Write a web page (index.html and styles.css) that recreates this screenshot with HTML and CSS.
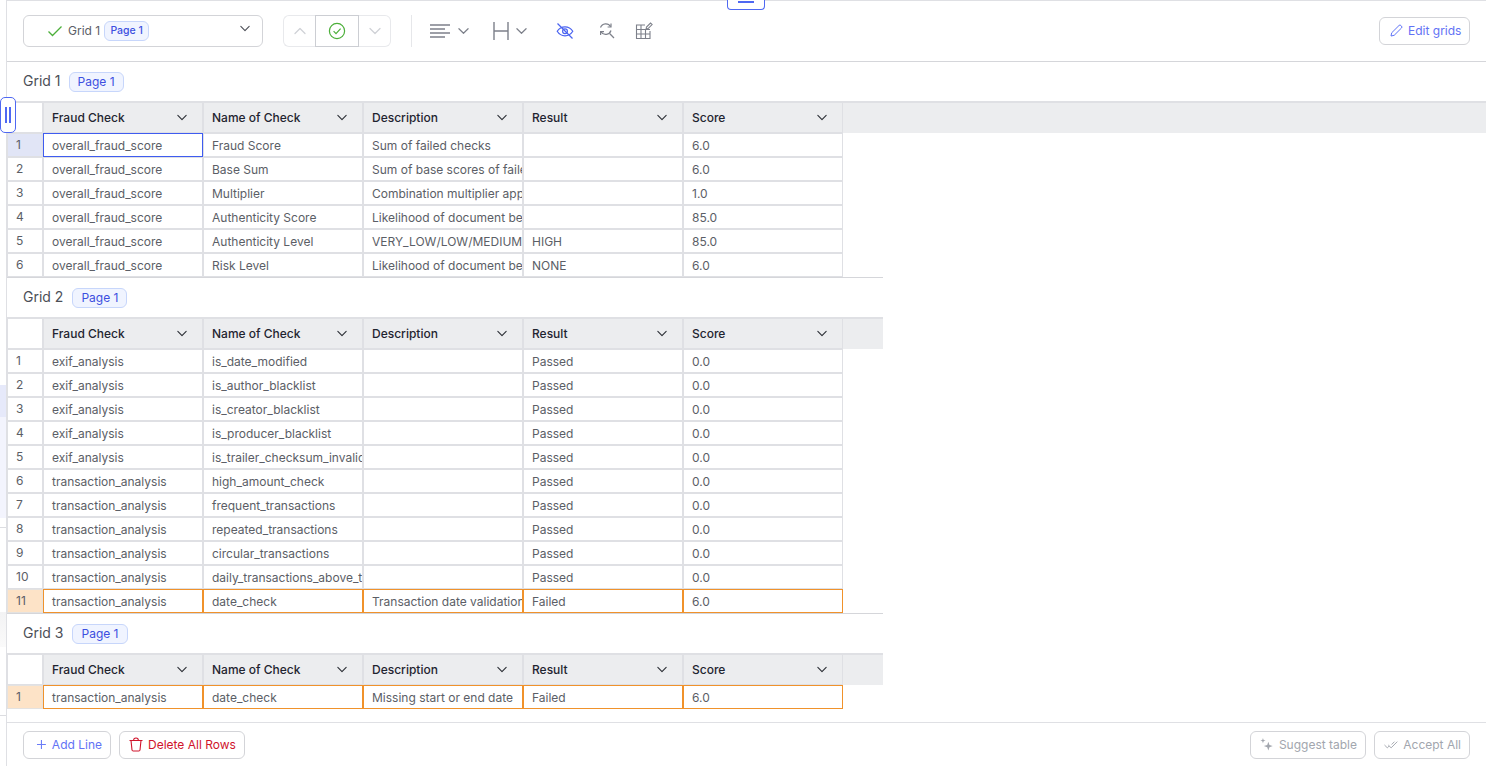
FILE: index.html
```html
<!DOCTYPE html>
<html lang="en">
<head>
<meta charset="utf-8">
<title>Grids</title>
<link rel="stylesheet" href="styles.css">
</head>
<body>
<svg class="defs" aria-hidden="true">
  <symbol id="chev" viewBox="0 0 12 8"><path d="M1 1.5 6 6.5 11 1.5" fill="none" stroke="currentColor" stroke-width="1.3" stroke-linecap="round" stroke-linejoin="round"/></symbol>
</svg>
<div class="screen">
  <div class="backdrop">
    <div class="bd-gap-a"></div>
    <div class="bd-lav"></div>
    <div class="bd-lav-light"></div>
    <div class="bd-gap-b"></div>
    <div class="bd-line"></div>
    <div class="bd-gap-c"></div>
    <div class="bd-gray"></div>
    <div class="bd-gap-d"></div>
    <div class="bd-line"></div>
  </div>
  <div class="panel">
    <div class="handle-top"><span></span></div>
    <div class="handle-left"><span></span><span></span></div>

    <header class="toolbar">
      <div class="picker">
        <svg class="picker-check" width="16" height="12" viewBox="0 0 16 12"><path d="M1.5 6.5 5.5 10.5 14.5 1.5" fill="none" stroke="#4caf3a" stroke-width="1.3"/></svg>
        <span class="picker-label">Grid 1</span>
        <span class="badge badge-small">Page 1</span>
        <svg class="picker-chev"><use href="#chev"/></svg>
      </div>
      <div class="stepper">
        <div class="step step-off"><svg class="chev-flip"><use href="#chev"/></svg></div>
        <div class="step step-main">
          <svg width="18" height="18" viewBox="0 0 18 18"><circle cx="9" cy="9" r="7.6" fill="none" stroke="#4caf3a" stroke-width="1.2"/><path d="M5.6 9.2 8 11.6 12.6 6.6" fill="none" stroke="#4caf3a" stroke-width="1.2"/></svg>
        </div>
        <div class="step step-off"><svg><use href="#chev"/></svg></div>
      </div>
      <div class="divider"></div>
      <div class="tool tool-align">
        <svg width="20" height="14" viewBox="0 0 20 14"><path d="M0 1h20M0 5h15M0 9h20M0 13h15" stroke="#7d808a" stroke-width="1.4" fill="none"/></svg>
        <svg class="tool-chev"><use href="#chev"/></svg>
      </div>
      <div class="tool tool-width">
        <svg width="16" height="18" viewBox="0 0 16 18"><path d="M1 0v18M15 0v18M1 9h14" stroke="#7d808a" stroke-width="1.4" fill="none"/></svg>
        <svg class="tool-chev"><use href="#chev"/></svg>
      </div>
      <svg class="tool-eye" width="18" height="18" viewBox="0 0 18 18" fill="none" stroke="#4a63f0" stroke-width="1.2"><path d="M1.2 9.3C3 6.4 5.8 4.8 9 4.8s6 1.6 7.8 4.5C15 12.2 12.2 13.8 9 13.8S3 12.2 1.2 9.3Z"/><circle cx="9" cy="9.3" r="2.4"/><path d="M1.5 1.5 16.5 16.5"/></svg>
      <svg class="tool-find" width="16" height="17" viewBox="0 0 16 17" fill="none" stroke="#7d808a" stroke-width="1.2"><path d="M1.5 5.5A5.6 5.6 0 0 1 11.6 4.6"/><path d="M12 1.5v3.5H8.6"/><path d="M12 8.5A5.6 5.6 0 0 1 2 9.8"/><path d="M1.6 13V9.6H5"/><path d="M10.6 11.5 15 16"/></svg>
      <svg class="tool-table" width="18" height="18" viewBox="0 0 18 18" fill="none" stroke="#7d808a" stroke-width="1.1"><path d="M10 3H1.5v13.5H15V9"/><path d="M1.5 7.5H15M1.5 12H15M6 3v13.5M10.5 7.5v9"/><path d="M11 7.5 11.5 5 15.5 1l1.6 1.6-4 4Z" fill="#fff"/></svg>
      <button class="btn btn-edit" type="button">
        <svg width="13" height="13" viewBox="0 0 13 13" fill="none" stroke="#5f73f7" stroke-width="1"><path d="M1 12 1.7 8.8 9 1.5a1.3 1.3 0 0 1 1.9 0l.6.6a1.3 1.3 0 0 1 0 1.9L4.2 11.3Z"/></svg>
        Edit grids
      </button>
    </header>

    <main class="body">
      <section>
        <div class="title"><span class="title-text">Grid 1</span><span class="badge">Page 1</span></div>
        <div class="row row-head">
          <div class="cell num"></div>
          <div class="cell hd">Fraud Check<svg><use href="#chev"/></svg></div>
          <div class="cell hd">Name of Check<svg><use href="#chev"/></svg></div>
          <div class="cell hd">Description<svg><use href="#chev"/></svg></div>
          <div class="cell hd">Result<svg><use href="#chev"/></svg></div>
          <div class="cell hd">Score<svg><use href="#chev"/></svg></div>
          <div class="head-fill"></div>
        </div>
        <div class="row"><div class="cell num num-sel">1</div><div class="cell cell-sel">overall_fraud_score</div><div class="cell">Fraud Score</div><div class="cell">Sum of failed checks</div><div class="cell"></div><div class="cell">6.0</div></div>
        <div class="row"><div class="cell num">2</div><div class="cell">overall_fraud_score</div><div class="cell">Base Sum</div><div class="cell">Sum of base scores of failed checks</div><div class="cell"></div><div class="cell">6.0</div></div>
        <div class="row"><div class="cell num">3</div><div class="cell">overall_fraud_score</div><div class="cell">Multiplier</div><div class="cell">Combination multiplier applied</div><div class="cell"></div><div class="cell">1.0</div></div>
        <div class="row"><div class="cell num">4</div><div class="cell">overall_fraud_score</div><div class="cell">Authenticity Score</div><div class="cell">Likelihood of document being authentic</div><div class="cell"></div><div class="cell">85.0</div></div>
        <div class="row"><div class="cell num">5</div><div class="cell">overall_fraud_score</div><div class="cell">Authenticity Level</div><div class="cell">VERY_LOW/LOW/MEDIUM/HIGH</div><div class="cell">HIGH</div><div class="cell">85.0</div></div>
        <div class="row"><div class="cell num">6</div><div class="cell">overall_fraud_score</div><div class="cell">Risk Level</div><div class="cell">Likelihood of document being fraudulent</div><div class="cell">NONE</div><div class="cell">6.0</div></div>
        <div class="rule"></div>
      </section>

      <section class="narrow">
        <div class="title"><span class="title-text">Grid 2</span><span class="badge">Page 1</span></div>
        <div class="row row-head">
          <div class="cell num"></div>
          <div class="cell hd">Fraud Check<svg><use href="#chev"/></svg></div>
          <div class="cell hd">Name of Check<svg><use href="#chev"/></svg></div>
          <div class="cell hd">Description<svg><use href="#chev"/></svg></div>
          <div class="cell hd">Result<svg><use href="#chev"/></svg></div>
          <div class="cell hd">Score<svg><use href="#chev"/></svg></div>
          <div class="head-fill"></div>
        </div>
        <div class="row"><div class="cell num">1</div><div class="cell">exif_analysis</div><div class="cell">is_date_modified</div><div class="cell"></div><div class="cell">Passed</div><div class="cell">0.0</div></div>
        <div class="row"><div class="cell num">2</div><div class="cell">exif_analysis</div><div class="cell">is_author_blacklist</div><div class="cell"></div><div class="cell">Passed</div><div class="cell">0.0</div></div>
        <div class="row"><div class="cell num">3</div><div class="cell">exif_analysis</div><div class="cell">is_creator_blacklist</div><div class="cell"></div><div class="cell">Passed</div><div class="cell">0.0</div></div>
        <div class="row"><div class="cell num">4</div><div class="cell">exif_analysis</div><div class="cell">is_producer_blacklist</div><div class="cell"></div><div class="cell">Passed</div><div class="cell">0.0</div></div>
        <div class="row"><div class="cell num">5</div><div class="cell">exif_analysis</div><div class="cell">is_trailer_checksum_invalid</div><div class="cell"></div><div class="cell">Passed</div><div class="cell">0.0</div></div>
        <div class="row"><div class="cell num">6</div><div class="cell">transaction_analysis</div><div class="cell">high_amount_check</div><div class="cell"></div><div class="cell">Passed</div><div class="cell">0.0</div></div>
        <div class="row"><div class="cell num">7</div><div class="cell">transaction_analysis</div><div class="cell">frequent_transactions</div><div class="cell"></div><div class="cell">Passed</div><div class="cell">0.0</div></div>
        <div class="row"><div class="cell num">8</div><div class="cell">transaction_analysis</div><div class="cell">repeated_transactions</div><div class="cell"></div><div class="cell">Passed</div><div class="cell">0.0</div></div>
        <div class="row"><div class="cell num">9</div><div class="cell">transaction_analysis</div><div class="cell">circular_transactions</div><div class="cell"></div><div class="cell">Passed</div><div class="cell">0.0</div></div>
        <div class="row"><div class="cell num">10</div><div class="cell">transaction_analysis</div><div class="cell">daily_transactions_above_threshold</div><div class="cell"></div><div class="cell">Passed</div><div class="cell">0.0</div></div>
        <div class="row row-warn"><div class="cell num">11</div><div class="cell">transaction_analysis</div><div class="cell">date_check</div><div class="cell">Transaction date validation</div><div class="cell">Failed</div><div class="cell">6.0</div></div>
        <div class="rule"></div>
      </section>

      <section class="narrow">
        <div class="title"><span class="title-text">Grid 3</span><span class="badge">Page 1</span></div>
        <div class="row row-head">
          <div class="cell num"></div>
          <div class="cell hd">Fraud Check<svg><use href="#chev"/></svg></div>
          <div class="cell hd">Name of Check<svg><use href="#chev"/></svg></div>
          <div class="cell hd">Description<svg><use href="#chev"/></svg></div>
          <div class="cell hd">Result<svg><use href="#chev"/></svg></div>
          <div class="cell hd">Score<svg><use href="#chev"/></svg></div>
          <div class="head-fill"></div>
        </div>
        <div class="row row-warn"><div class="cell num">1</div><div class="cell">transaction_analysis</div><div class="cell">date_check</div><div class="cell">Missing start or end date</div><div class="cell">Failed</div><div class="cell">6.0</div></div>
      </section>
    </main>

    <footer class="footer">
      <button class="btn btn-add" type="button">
        <svg width="11" height="11" viewBox="0 0 11 11"><path d="M5.5 1v9M1 5.5h9" stroke="#6a7cf7" stroke-width="1.1" fill="none"/></svg>
        Add Line
      </button>
      <button class="btn btn-del" type="button">
        <svg width="14" height="15" viewBox="0 0 14 15" fill="none" stroke="#d0142c" stroke-width="1.1"><path d="M.5 3.5h13M4.6 3.5C4.6 1.8 5.6 1 7 1s2.4.8 2.4 2.5M2 3.5 3 13a1.2 1.2 0 0 0 1.2 1h5.6A1.2 1.2 0 0 0 11 13l1-9.5"/></svg>
        Delete All Rows
      </button>
      <div class="footer-space"></div>
      <button class="btn btn-off btn-suggest" type="button">
        <svg width="15" height="15" viewBox="0 0 15 15" fill="#a2a6ae"><path d="M9 4.5 10.2 8 13.8 9.2 10.2 10.4 9 14 7.8 10.4 4.2 9.2 7.8 8Z"/><path d="M3.2.5 3.9 2.6 6 3.3 3.9 4 3.2 6.1 2.5 4 .4 3.3 2.5 2.6Z"/></svg>
        Suggest table
      </button>
      <button class="btn btn-off btn-accept" type="button">
        <svg width="15" height="10" viewBox="0 0 15 10" fill="none" stroke="#a2a6ae" stroke-width="1"><path d="M.5 5 3.5 8 5.5 6M4.5 5 7.5 8 14 1.5M8 4.5 11 1.5"/></svg>
        Accept All
      </button>
    </footer>
  </div>
</div>
</body>
</html>
```

FILE: styles.css
```css
* { box-sizing: border-box; }
html, body { margin: 0; padding: 0; height: 100%; overflow: hidden; background: #fff; }
body { font-family: Inter, "Liberation Sans", sans-serif; font-size: 12px; color: #5b5e66; }

.defs { position: absolute; width: 0; height: 0; }

.screen { display: flex; width: 1486px; height: 766px; }

.backdrop { width: 6px; flex: none; display: flex; flex-direction: column; }
.bd-gap-a { height: 385px; }
.bd-lav { height: 32px; background: #e6e9fa; }
.bd-lav-light { height: 101px; background: #f3f4fd; }
.bd-gap-b { height: 9px; }
.bd-line { height: 1px; background: #dcdde1; }
.bd-gap-c { height: 84px; }
.bd-gray { height: 35px; background: linear-gradient(#f3f3f4, #fafafa); }
.bd-gap-d { height: 68px; }

.panel { position: relative; flex: 1; min-width: 0; display: flex; flex-direction: column; border-top: 1px solid #dfe0e4; border-left: 1px solid #dfe0e4; background: #fff; }

.handle-top { position: absolute; left: 720px; top: -1px; width: 38px; height: 10px; background: #fff; border: 1px solid #4f68f2; border-top: 0; border-radius: 0 0 4px 4px; display: flex; justify-content: center; }
.handle-top span { width: 16px; height: 2px; margin-top: 1px; background: #4f68f2; }
.handle-left { position: absolute; left: -7px; top: 96px; width: 16px; height: 36px; background: #fff; border: 1px solid #4f68f2; border-radius: 5px; display: flex; justify-content: center; gap: 2px; padding: 9px 0; z-index: 2; }
.handle-left span { width: 2px; background: #4f68f2; }

.toolbar { height: 61px; flex: none; display: flex; align-items: center; padding: 0 16px 1px 16px; border-bottom: 1px solid #d5d6da; }

.picker { width: 240px; height: 32px; flex: none; display: flex; align-items: center; padding-left: 23px; border: 1px solid #d3d4d8; border-radius: 6px; }
.picker-check { flex: none; margin-right: 5px; }
.picker-label { color: #5b5e66; }
.picker-chev { width: 10px; height: 7px; margin-left: auto; margin-right: 12px; margin-bottom: 4px; color: #4a4d55; }

.badge { display: inline-flex; align-items: center; justify-content: center; height: 20px; padding: 0 8px; color: #3d4fe0; background: #f0f4ff; border: 1px solid #c7d6fb; border-radius: 6px; font-size: 12px; }
.badge-small { margin-left: 4px; width: 45px; padding: 0; font-size: 10.5px; font-weight: 500; }

.stepper { display: flex; margin-left: 20px; height: 32px; flex: none; }
.step { display: flex; align-items: center; justify-content: center; border: 1px solid #e8e9ec; color: #d0d2d7; }
.step svg { width: 12px; height: 8px; }
.step-off { width: 32px; border-radius: 0 6px 6px 0; border-left: 0; }
.step-off:first-child { border-radius: 6px 0 0 6px; border-left: 1px solid #e8e9ec; border-right: 0; }
.step-main { width: 44px; border-color: #ccced3; }
.step-main svg { width: 18px; height: 18px; }
.chev-flip { transform: scaleY(-1); }

.divider { width: 1px; height: 32px; margin-left: 20px; background: #e6e7ea; flex: none; }

.tool { display: flex; align-items: center; flex: none; color: #7d808a; }
.tool-align { margin-left: 18px; }
.tool-width { margin-left: 24px; }
.tool-chev { width: 11px; height: 8px; margin-left: 8px; }
.tool-width .tool-chev { margin-left: 7px; }
.tool-eye { margin-left: 29px; flex: none; }
.tool-find { margin-left: 25px; flex: none; }
.tool-table { margin-left: 20px; flex: none; }

.btn { display: inline-flex; align-items: center; gap: 5px; height: 28px; padding: 0 8px; font-family: inherit; font-size: 12px; white-space: nowrap; background: #fff; border: 1px solid #d3d4d8; border-radius: 6px; flex: none; }
.btn-edit { margin-left: auto; color: #6272f5; width: 91px; padding: 0 0 0 10px; }
.btn-add { color: #6272f5; width: 88px; padding-left: 12px; gap: 5px; }
.btn-del { color: #d0142c; width: 126px; margin-left: 8px; padding-left: 9px; }
.btn-off { color: #a2a6ae; margin-left: 8px; padding-left: 9px; }
.btn-suggest { width: 116px; }
.btn-accept { width: 96px; }

.body { flex: 1; min-height: 0; }
.narrow { width: 876px; }

.title { display: flex; align-items: center; gap: 8px; height: 39px; padding-left: 16px; font-size: 14px; color: #4c4f57; }
.title-text { margin-bottom: 2px; }
.narrow .badge { margin-left: 1px; }
.rule { width: 876px; height: 1px; background: #d5d6da; }

.row { display: flex; height: 24px; }
.row-head { height: 32px; }
.row-head .cell { border-top-width: 2px; }
.cell { width: 160px; flex: none; padding: 0 0 0 8px; display: flex; align-items: center; white-space: nowrap; overflow: hidden; background: #fff; border: 1px solid #dfe0e4; }
.num { width: 36px; padding-bottom: 2px; }
.num-sel { background: #e1e5f6; }
.cell-sel { border-color: #3f5cf0; }
.row-warn .cell { border-color: #f0922b; }
.row-warn .num { background: #fde3c7; border-color: #e4e2e0; }

.hd { position: relative; background: #ecedef; color: #1f2430; font-weight: 500; justify-content: space-between; padding-right: 15px; }
.hd svg { width: 10px; height: 7px; flex: none; color: #2a2d34; }
.head-fill { flex: 1; background: #ecedef; border-top: 2px solid #dfe0e4; }

.footer { height: 44px; flex: none; display: flex; align-items: center; padding: 0 16px 0 16px; border-top: 1px solid #dfe0e4; }
.footer-space { flex: 1; }
```
